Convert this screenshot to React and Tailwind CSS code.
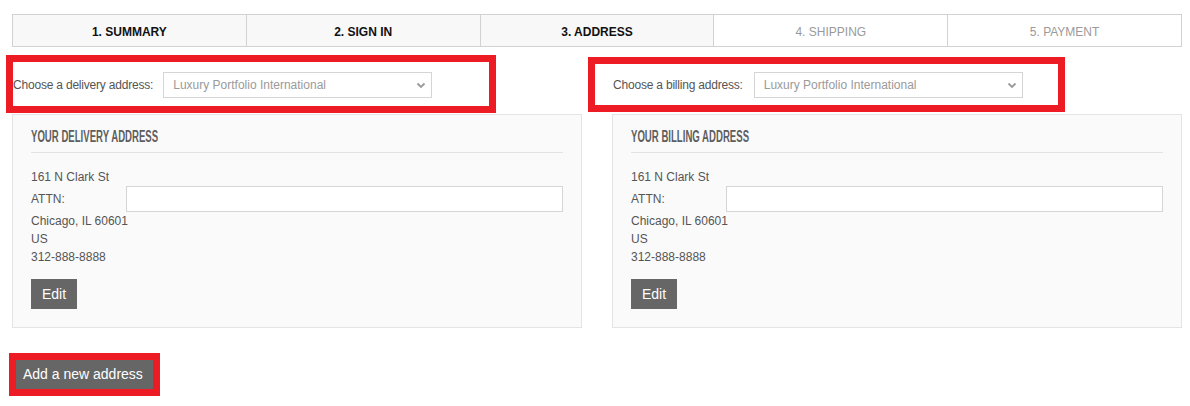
import React from "react";

const steps = [
  { label: "1. SUMMARY", active: true },
  { label: "2. SIGN IN", active: true },
  { label: "3. ADDRESS", active: true },
  { label: "4. SHIPPING", active: false },
  { label: "5. PAYMENT", active: false },
];

function Chevron() {
  return (
    <svg width="10" height="7" viewBox="0 0 10 7" className="pointer-events-none absolute right-[6px] top-[10px]">
      <path d="M1.5 1.5 L5 5 L8.5 1.5" fill="none" stroke="#9a9a9a" strokeWidth="1.8" />
    </svg>
  );
}

function AddressSelect() {
  return (
    <div className="relative w-[269px] h-[26px]">
      <select
        className="appearance-none w-full h-full border border-[#d5d5d5] bg-white pl-[9px] text-[12px] text-[#9a9a9a] outline-none"
        defaultValue="lpi"
      >
        <option value="lpi">Luxury Portfolio International</option>
      </select>
      <Chevron />
    </div>
  );
}

function AddressPanel({ title }) {
  return (
    <div className="border border-[#e4e4e4] bg-[#fafafa] px-[18px] pt-[10px] pb-[19px] h-[214px]">
      <div className="border-b border-[#e2e2e2] h-[28px] overflow-hidden">
        <span
          className="inline-block origin-left scale-x-[0.6] whitespace-nowrap text-[16px] font-bold text-[#5e5e5e] leading-[15px]"
          style={{ fontFamily: '"Liberation Sans", Arial, sans-serif' }}
        >
          {title}
        </span>
      </div>
      <div className="pt-[15px] text-[12px] leading-[18px] text-[#555]">
        <div>161 N Clark St</div>
        <div className="flex items-center h-[26px]">
          <span className="w-[95px]">ATTN:</span>
          <input type="text" className="flex-1 h-[26px] border border-[#d5d5d5] bg-white outline-none" />
        </div>
        <div>Chicago, IL 60601</div>
        <div>US</div>
        <div>312-888-8888</div>
        <button className="mt-[13px] h-[30px] px-[11px] bg-[#666] text-white text-[14px] leading-[30px]">
          Edit
        </button>
      </div>
    </div>
  );
}

export default function App() {
  return (
    <div
      className="w-[1190px] h-[406px] bg-white pl-[12px] pt-[14px] overflow-hidden"
      style={{ fontFamily: '"Liberation Sans", Arial, sans-serif' }}
    >
      <div className="flex w-[1170px] border border-[#d2d2d2] h-[33px]">
        {steps.map((s, i) => (
          <div
            key={s.label}
            className={
              "flex-1 flex items-center justify-center pt-[2px] text-[12px] " +
              (i > 0 ? "border-l border-[#d2d2d2] " : "") +
              (s.active ? "bg-[#f8f8f8] font-bold text-[#111]" : "bg-white text-[#9a9a9a]")
            }
          >
            {s.label}
          </div>
        ))}
      </div>

      <div className="grid grid-cols-[570px_570px] grid-rows-[59px_auto] gap-x-[30px] mt-[8px]">
        <div className="-ml-[6px] w-[490px] h-[58px] border-[7px] border-[#ed1c24] flex items-center gap-[10px] pt-[2px]">
          <span className="text-[12px] text-[#555] tracking-[-0.2px]">Choose a delivery address:</span>
          <AddressSelect />
        </div>
        <div className="mt-[2px] -ml-[24px] w-[477px] h-[55px] border-[7px] border-[#ed1c24] flex items-center gap-[11px] pl-[18px] pt-[1px]">
          <span className="text-[12px] text-[#555] tracking-[-0.2px]">Choose a billing address:</span>
          <AddressSelect />
        </div>
        <AddressPanel title="YOUR DELIVERY ADDRESS" />
        <AddressPanel title="YOUR BILLING ADDRESS" />
      </div>

      <div className="mt-[25px] -ml-[3px] inline-block border-[7px] border-[#ed1c24]">
        <button className="h-[29px] w-[137px] bg-[#666] text-white text-[14px] pl-[7px] text-left">
          Add a new address
        </button>
      </div>
    </div>
  );
}
